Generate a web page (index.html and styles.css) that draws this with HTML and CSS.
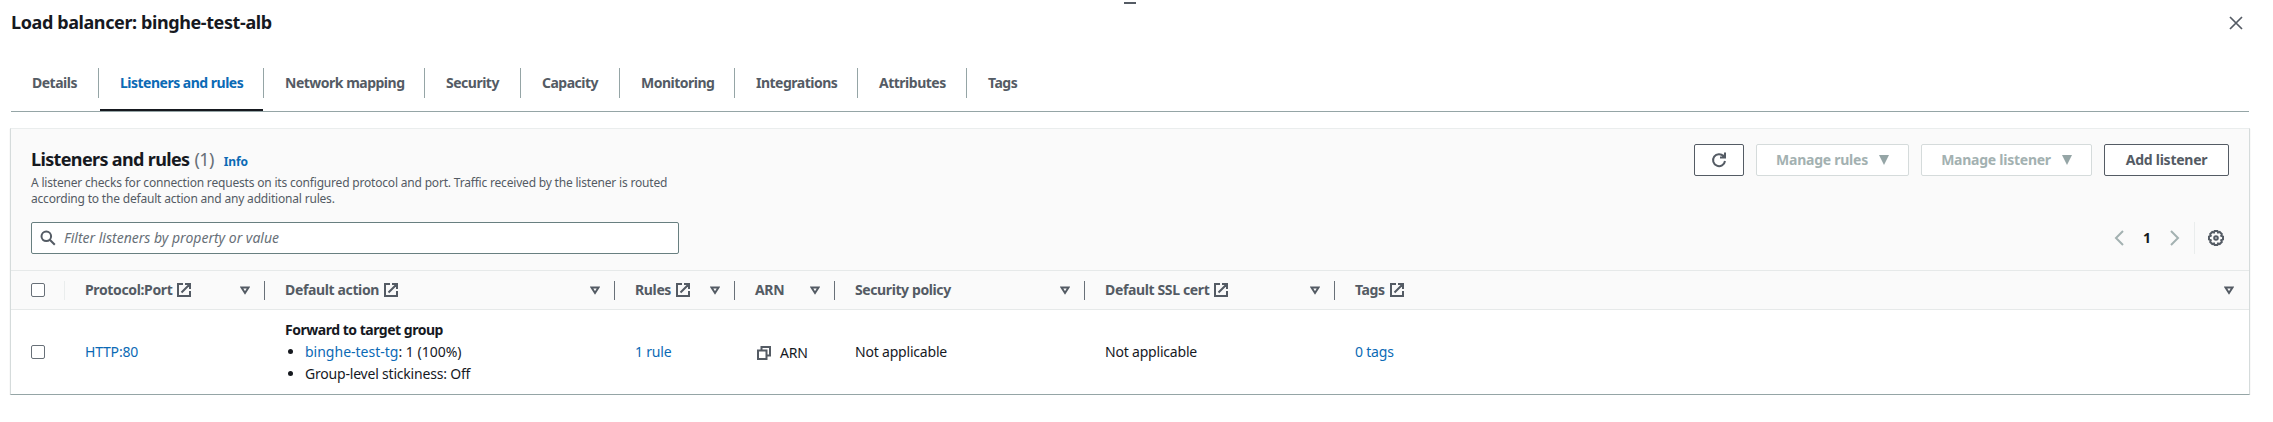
FILE: index.html
```
<!DOCTYPE html>
<html lang="en">
<head>
<meta charset="utf-8">
<title>Load balancer</title>
<link rel="stylesheet" href="styles.css">
</head>
<body>
<svg width="0" height="0" class="defs">
  <symbol id="external" viewBox="0 0 14 14"><path d="M6 1H1v12h12V8M8 1h5v5M13 1 4.5 9.5"/></symbol>
  <symbol id="sort" viewBox="0 0 10 9"><path d="M1.5 1.5h7L5 7z"/></symbol>
</svg>
<div class="grip"></div>
<main class="page">
  <header class="title-row">
    <h1>Load balancer: binghe-test-alb</h1>
    <svg class="icon close" width="14" height="14" viewBox="0 0 14 14"><path d="m1 1 12 12M13 1 1 13"/></svg>
  </header>
  <nav class="tabs">
    <a class="tab">Details</a><a class="tab active">Listeners and rules</a><a class="tab">Network mapping</a><a class="tab">Security</a><a class="tab">Capacity</a><a class="tab">Monitoring</a><a class="tab">Integrations</a><a class="tab">Attributes</a><a class="tab">Tags</a>
  </nav>
  <section class="panel">
    <div class="panel-head">
      <div class="heading">
        <h2>Listeners and rules <span class="count">(1)</span><a class="info">Info</a></h2>
        <p>A listener checks for connection requests on its configured protocol and port. Traffic received by the listener is routed<br>according to the default action and any additional rules.</p>
      </div>
      <div class="actions">
        <button class="btn refresh"><svg class="icon" width="16" height="18" viewBox="0 0 16 18"><path d="M14 10A6 6 0 1 1 12.600 5.200M14 1.500v5H9M13.500 3.500v2H11"/></svg></button>
        <button class="btn disabled rules">Manage rules<i class="caret"></i></button>
        <button class="btn disabled listener">Manage listener<i class="caret"></i></button>
        <button class="btn add">Add listener</button>
      </div>
    </div>
    <div class="tools">
      <div class="search">
        <svg class="icon" width="16" height="16" viewBox="0 0 16 16"><circle cx="6.3" cy="6.3" r="4.8"/><path d="m9.8 9.8 5 5"/></svg>
        <span>Filter listeners by property or value</span>
      </div>
      <div class="pager">
        <svg class="icon arrow" width="10" height="16" viewBox="0 0 10 16"><path d="M9 1 2 8l7 7"/></svg>
        <b>1</b>
        <svg class="icon arrow" width="10" height="16" viewBox="0 0 10 16"><path d="m1 1 7 7-7 7"/></svg>
        <span class="settings"><svg class="icon" width="16" height="16" viewBox="0 0 16 16"><path d="M6.6 1h2.8l.6 1.5 1.7-.5 2.1 2.1-.6 1.6 1.8.9v2.8l-1.8.9.6 1.6-2.1 2.1-1.7-.5-.6 1.5H6.6L6 13.500l-1.700.5-2.100-2.100.6-1.600L1 9.400V6.600l1.800-.9-.6-1.600L4.300 2l1.700.5z"/><circle cx="8" cy="8" r="1.8"/></svg></span>
      </div>
    </div>
    <div class="row thead">
      <div class="cell check"><i class="box"></i></div>
      <div class="cell"><span>Protocol:Port</span><svg class="icon ext"><use href="#external"/></svg><svg class="icon sort"><use href="#sort"/></svg></div>
      <div class="cell"><span>Default action</span><svg class="icon ext"><use href="#external"/></svg><svg class="icon sort"><use href="#sort"/></svg></div>
      <div class="cell"><span>Rules</span><svg class="icon ext"><use href="#external"/></svg><svg class="icon sort"><use href="#sort"/></svg></div>
      <div class="cell"><span>ARN</span><svg class="icon sort"><use href="#sort"/></svg></div>
      <div class="cell"><span class="tight">Security policy</span><svg class="icon sort"><use href="#sort"/></svg></div>
      <div class="cell"><span>Default SSL cert</span><svg class="icon ext"><use href="#external"/></svg><svg class="icon sort"><use href="#sort"/></svg></div>
      <div class="cell"><span>Tags</span><svg class="icon ext"><use href="#external"/></svg><svg class="icon sort"><use href="#sort"/></svg></div>
    </div>
    <div class="row tbody">
      <div class="cell check"><i class="box"></i></div>
      <div class="cell"><a>HTTP:80</a></div>
      <div class="cell"><div class="forward"><strong>Forward to target group</strong><ul><li class="target"><a>binghe-test-tg</a>: 1 (100%)</li><li>Group-level stickiness: Off</li></ul></div></div>
      <div class="cell"><a>1 rule</a></div>
      <div class="cell arn"><svg class="icon" width="14" height="14" viewBox="0 0 14 14"><path d="M4.500 4V1H13v8.500h-3M1 4.500h8.500V13H1z"/></svg><span>ARN</span></div>
      <div class="cell"><span>Not applicable</span></div>
      <div class="cell"><span>Not applicable</span></div>
      <div class="cell"><a>0 tags</a></div>
    </div>
  </section>
</main>
</body>
</html>
```
FILE: styles.css
```
* { box-sizing: border-box; }
body { margin: 0; background: #fff; color: #16191f; font: 14px/22px "Noto Sans", sans-serif; letter-spacing: -0.2px; }
h1, h2, p, ul { margin: 0; }
a { color: #0b6ab5; }
.defs { position: absolute; }
.icon { fill: none; stroke: #545b64; stroke-width: 2; flex: none; display: block; }
.grip { position: absolute; left: 1124px; top: 2px; width: 12px; height: 2px; background: #545b64; }
.page { padding: 11px 24px 0 11px; }
.title-row { display: flex; justify-content: space-between; height: 57px; }
h1 { font-size: 18px; line-height: 22px; letter-spacing: -0.4px; }
.close { margin: 5px 6px 0 0; stroke-width: 1.7; }

.tabs { display: grid; grid-template-columns: 88px 165px 161px 96px 99px 115px 123px 109px 1fr; height: 44px; border-bottom: 1px solid #95a5a6; }
.tab { position: relative; height: 30px; padding: 4px 0 0 21px; border-right: 1px solid #95a5a6; color: #545b64; font-weight: 700; letter-spacing: -0.5px; white-space: nowrap; }
.tab:last-child { border: 0; }
.tab.active { color: #0b6ab5; }
.tab.active::after { content: ""; position: absolute; left: 1px; right: 0; top: 41px; height: 2px; background: #16191f; }

.panel { margin: 16px -1px 0; border: 1px solid #d5dbdb; border-top-color: #eaeded; border-bottom-color: #95a5a6; box-shadow: 0 1px 1px rgba(0, 28, 36, .15); }
.panel-head { display: flex; justify-content: space-between; height: 93px; padding: 15px 20px 0; background: #fafafa; }
.heading { padding-top: 4px; }
h2 { font-size: 18px; line-height: 22px; letter-spacing: -0.64px; }
.count { font-weight: 400; color: #687078; margin-left: 1px; }
.info { margin-left: 10px; font-size: 12px; letter-spacing: -0.1px; }
.heading p { padding-top: 2px; font-size: 12px; line-height: 16px; letter-spacing: -0.19px; color: #545b64; white-space: nowrap; }
.actions { display: flex; gap: 12px; }
.btn { display: flex; align-items: center; justify-content: center; height: 32px; padding: 0; border: 1px solid #545b64; border-radius: 2px; background: #fff; color: #545b64; font: 700 14px/22px "Noto Sans", sans-serif; letter-spacing: -0.25px; white-space: nowrap; }
.btn.disabled { border-color: #d5dbdb; color: #a3b1b1; }
.refresh { width: 50px; }
.rules { width: 153px; }
.listener { width: 171px; }
.add { width: 125px; }
.caret { margin-left: 11px; border: 5.500px solid transparent; border-top: 10px solid #95a5a6; border-bottom: 0; }

.tools { display: flex; justify-content: space-between; height: 48px; padding: 0 20px; background: #fafafa; }
.search { display: flex; align-items: center; width: 648px; height: 32px; padding: 0 8px; border: 1px solid #687f80; border-radius: 2px; background: #fff; color: #687078; font-style: italic; letter-spacing: 0; }
.search span { margin-left: 8px; }
.pager { display: flex; align-items: center; height: 32px; }
.pager b { width: 46px; text-align: center; }
.arrow { stroke: #a3b1b1; }
.settings { display: flex; align-items: center; height: 32px; margin-left: 14px; padding: 0 5px 0 13px; border-left: 1px solid #eaeded; }

.row { display: grid; grid-template-columns: 54px 200px 350px 120px 100px 250px 250px 1fr; }
.cell { display: flex; align-items: center; padding-left: 20px; }
.thead { height: 40px; border: solid #e6e9e9; border-width: 1px 0; background: #fafafa; color: #545b64; font-weight: 700; letter-spacing: -0.36px; }
.thead .cell { position: relative; padding-right: 15px; }
.thead .cell:not(:last-child)::after { content: ""; position: absolute; right: 0; top: 10px; width: 1px; height: 19px; background: #687078; }
.thead .check::after { background: #eaeded !important; }
.tight { letter-spacing: -0.4px; }
.box { display: block; width: 14px; height: 14px; border: 1px solid #687078; border-radius: 2px; background: #fff; }
.ext { width: 14px; height: 14px; margin-left: 5px; }
.sort { width: 10px; height: 9px; margin-left: auto; }
.tbody { height: 84px; }
.forward strong { display: block; letter-spacing: -0.48px; }
.forward ul { padding-left: 20px; }
.forward .target { letter-spacing: 0; }
.arn .icon { margin: 1px 9px 0 2px; }
.arn span { margin-top: 2px; }
```
